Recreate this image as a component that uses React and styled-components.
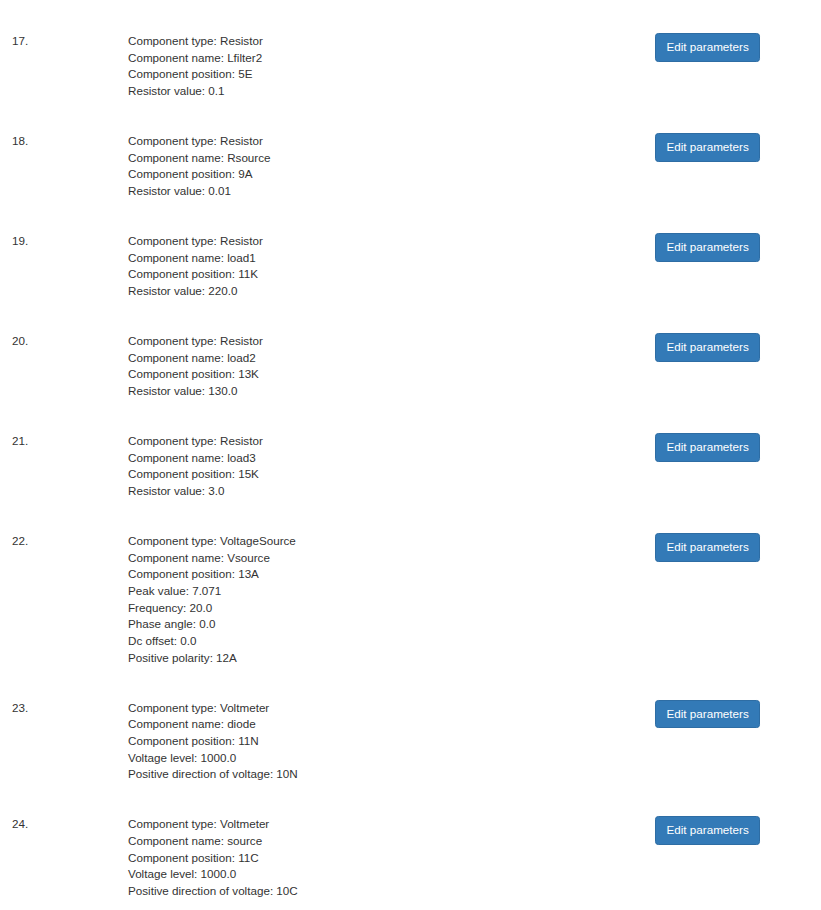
import React from "react";
import styled, { createGlobalStyle } from "styled-components";

const Global = createGlobalStyle`
  html, body { margin: 0; padding: 0; background: #fff; }
  body {
    font-family: "Liberation Sans", Arial, Helvetica, sans-serif;
    font-size: 11.67px;
    line-height: 16.67px;
    color: #333;
  }
`;

const List = styled.div`
  display: flex;
  flex-direction: column;
  padding: 33px 0 0 12px;
  width: 821px;
  box-sizing: border-box;
`;

const Row = styled.div`
  display: flex;
  align-items: flex-start;
  padding-bottom: 33.33px;
`;

const Num = styled.div`
  width: 116px;
  flex: none;
`;

const Details = styled.div`
  width: 527px;
  flex: none;
  display: flex;
  flex-direction: column;
`;

const Line = styled.div``;

const Button = styled.button`
  flex: none;
  font-family: inherit;
  font-size: 11.67px;
  line-height: 16.67px;
  color: #fff;
  background: #337ab7;
  border: 1px solid #2e6da4;
  border-radius: 3.33px;
  padding: 5px 10.5px;
  margin: 0;
  cursor: pointer;
  white-space: nowrap;
`;

const items = [
  ["17.", ["Component type: Resistor", "Component name: Lfilter2", "Component position: 5E", "Resistor value: 0.1"]],
  ["18.", ["Component type: Resistor", "Component name: Rsource", "Component position: 9A", "Resistor value: 0.01"]],
  ["19.", ["Component type: Resistor", "Component name: load1", "Component position: 11K", "Resistor value: 220.0"]],
  ["20.", ["Component type: Resistor", "Component name: load2", "Component position: 13K", "Resistor value: 130.0"]],
  ["21.", ["Component type: Resistor", "Component name: load3", "Component position: 15K", "Resistor value: 3.0"]],
  ["22.", ["Component type: VoltageSource", "Component name: Vsource", "Component position: 13A", "Peak value: 7.071", "Frequency: 20.0", "Phase angle: 0.0", "Dc offset: 0.0", "Positive polarity: 12A"]],
  ["23.", ["Component type: Voltmeter", "Component name: diode", "Component position: 11N", "Voltage level: 1000.0", "Positive direction of voltage: 10N"]],
  ["24.", ["Component type: Voltmeter", "Component name: source", "Component position: 11C", "Voltage level: 1000.0", "Positive direction of voltage: 10C"]],
];

export default function App() {
  return (
    <>
      <Global />
      <List>
        {items.map(([n, lines]) => (
          <Row key={n}>
            <Num>{n}</Num>
            <Details>
              {lines.map((l) => (
                <Line key={l}>{l}</Line>
              ))}
            </Details>
            <Button>Edit parameters</Button>
          </Row>
        ))}
      </List>
    </>
  );
}
